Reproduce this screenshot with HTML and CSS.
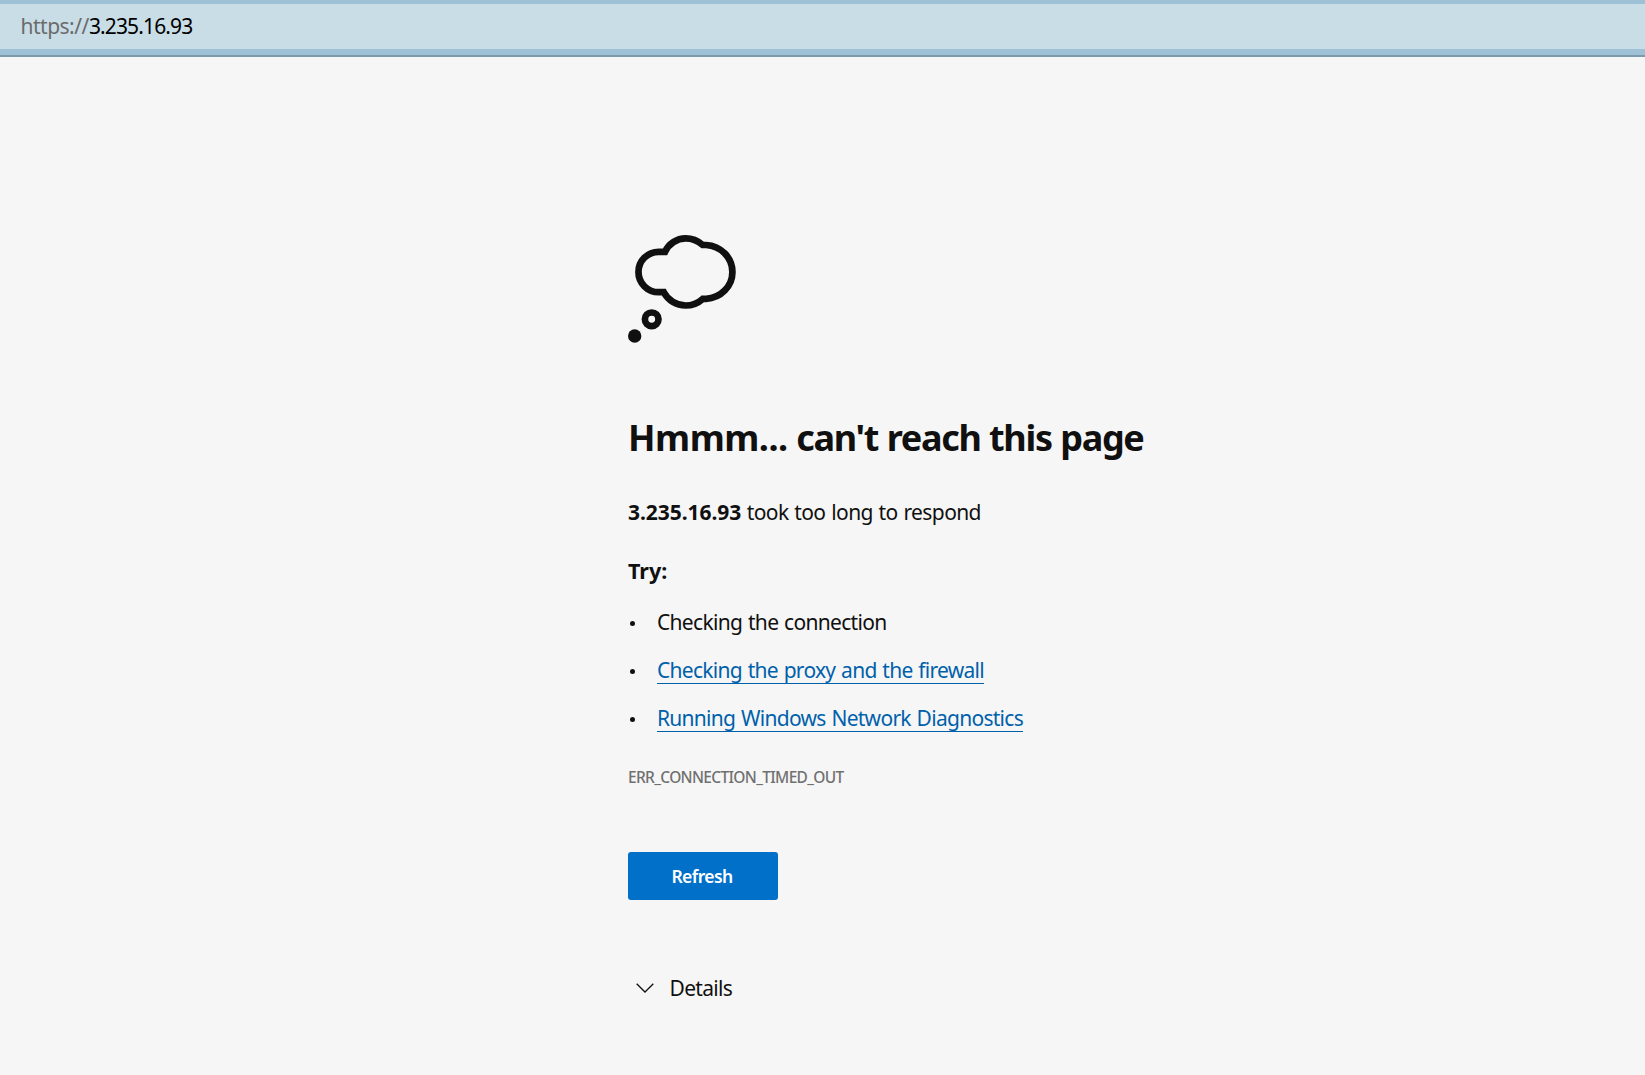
FILE: index.html
```
<!DOCTYPE html>
<html lang="en">
<head>
<meta charset="utf-8">
<title>3.235.16.93</title>
<link rel="stylesheet" href="styles.css">
</head>
<body>
<header class="address-bar"><div class="address-field"><span class="scheme">https://</span><span class="host">3.235.16.93</span></div></header>
<main class="error-page">
  <svg class="cloud" viewBox="0 0 108 108" aria-hidden="true">
    <path d="M36.500 16.800A22.600 22.600 0 0 1 57 3.400C63.500 3.400 69.400 6 74 10H77.300A27.900 27 0 0 1 77.300 63.900H74C69.400 68 63.500 70.500 57 70.500A24.500 24.500 0 0 1 35.300 57.200H30.300A20.200 20.200 0 0 1 30.300 16.800Z"/>
    <circle class="ring" cx="23.700" cy="84.300" r="6.800"/>
    <circle class="dot" cx="6.700" cy="101" r="6.700"/>
  </svg>
  <h1><span>Hmmm...</span> can't reach this page</h1>
  <p class="summary"><strong>3.235.16.93</strong> <span>took too long to respond</span></p>
  <h2>Try:</h2>
  <ul>
    <li><span>Checking the connection</span></li>
    <li><a class="proxy">Checking the proxy and the firewall</a></li>
    <li><a class="diagnostics">Running Windows Network Diagnostics</a></li>
  </ul>
  <div class="code">ERR_CONNECTION_TIMED_OUT</div>
  <button class="refresh" type="button">Refresh</button>
  <div class="details">
    <svg class="chevron" viewBox="0 0 18 10" aria-hidden="true"><path d="M.7.700 9 9 17.300.700"/></svg>
    <span>Details</span>
  </div>
</main>
</body>
</html>
```
FILE: styles.css
```
* { box-sizing: border-box; }
body {
  margin: 0;
  min-height: 1075px;
  background: #f6f6f6;
  color: #101010;
  font: 21px/28px "Noto Sans", sans-serif;
}
.address-bar {
  height: 57px;
  padding: 4px 0 6px;
  background: #9fc1d5;
  border-bottom: 2px solid #7b9bac;
}
.address-field {
  height: 45px;
  padding-left: 20.500px;
  background: #c9dde7;
  line-height: 45px;
}
.scheme { color: #6b6b6b; letter-spacing: -0.5px; }
.host { color: #000; letter-spacing: -0.86px; }
.error-page { margin-left: 628px; padding-top: 178px; }
.cloud { display: block; width: 108px; height: 108px; overflow: visible; fill: none; stroke: #101010; stroke-width: 6.700; }
.cloud path { transform: translateX(0.9px); }
.cloud path { transform: translateX(0.3px) scaleX(1.006); }
.cloud .dot { stroke: none; fill: #101010; }
h1 { margin: 71px 0 0; font-size: 36px; line-height: 48px; letter-spacing: -1.33px; word-spacing: 0.6px; }
h1 span { letter-spacing: -0.5px; }
.summary { margin: 36px 0 0; }
.summary strong { letter-spacing: -0.05px; }
.summary span { letter-spacing: -0.6px; word-spacing: 0.9px; }
h2 { margin: 31px 0 0; font-size: 21.500px; line-height: 28px; }
ul { margin: 23px 0 0; padding: 0; list-style: none; display: grid; gap: 20px; }
li { display: flex; align-items: center; height: 28px; letter-spacing: -0.69px; word-spacing: 1px; }
li::before { content: ""; width: 5px; height: 5px; margin: 3px 22.500px 0 1.500px; border-radius: 50%; background: #101010; }
li a { height: 27px; color: #0061ab; line-height: 27px; border-bottom: 1px solid #0061ab; }
li .proxy { letter-spacing: -0.72px; }
li .diagnostics { letter-spacing: -0.72px; }
.code { margin-top: 31px; color: #707070; font-size: 15.500px; font-weight: 500; letter-spacing: -0.67px; }
.refresh { display: block; width: 150px; height: 48px; margin: 61px 0 0; padding: 0 2px 0 0; border: 0; border-radius: 3px; background: #0070c9; color: #fff; font: 600 17.500px/24px "Noto Sans", sans-serif; letter-spacing: -0.6px; }
.details { display: flex; align-items: center; margin-top: 74px; padding-left: 7.500px; gap: 16px; letter-spacing: -0.7px; }
.chevron { width: 18px; height: 10px; fill: none; stroke: #101010; stroke-width: 1.300; }
```
